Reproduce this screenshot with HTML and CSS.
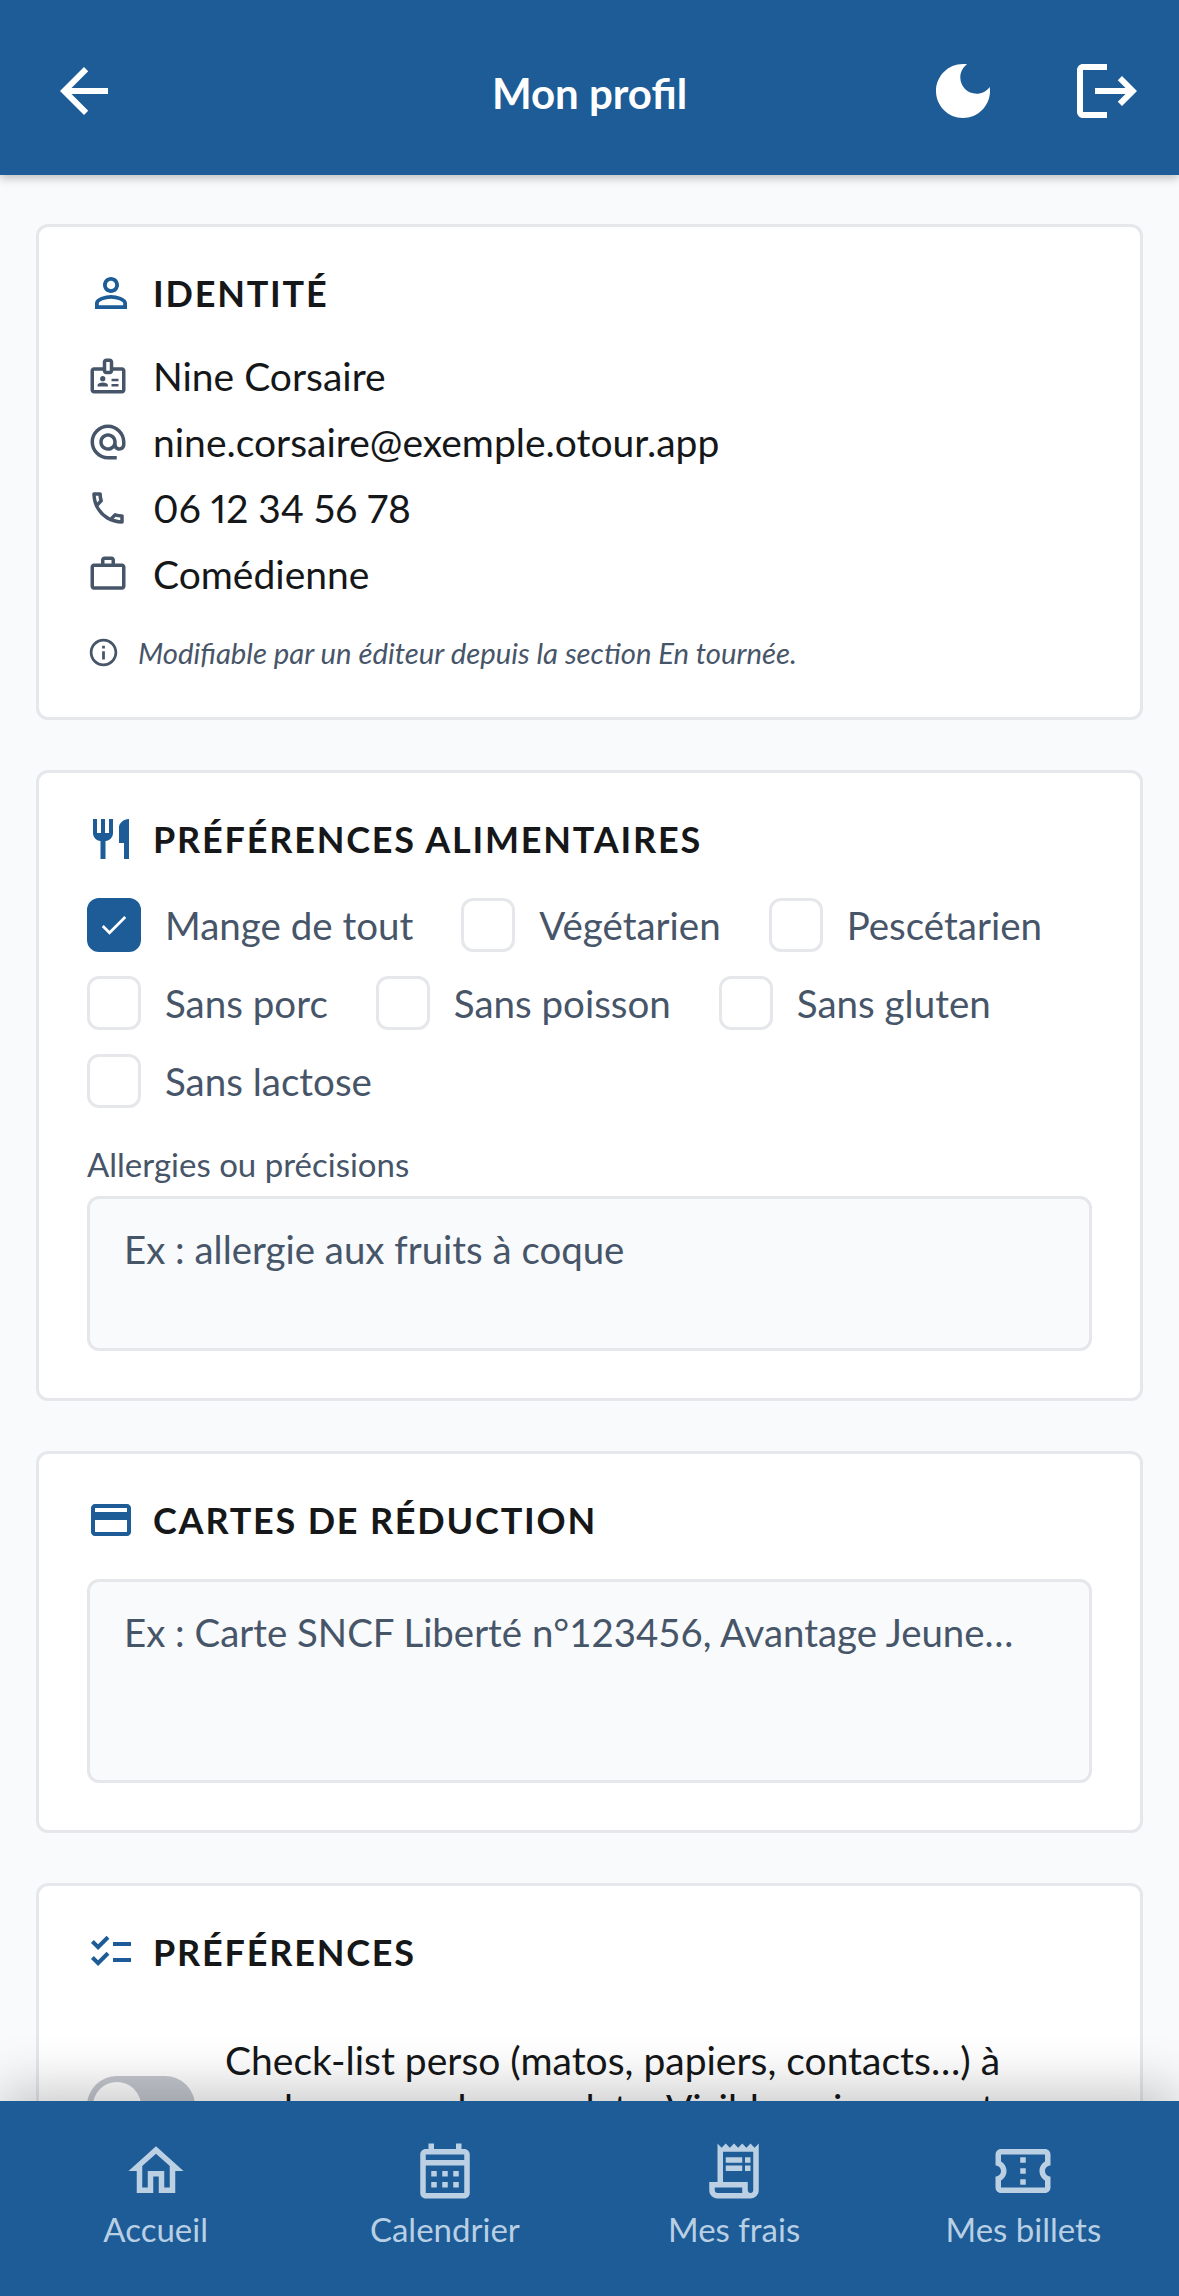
FILE: index.html
```html
<!DOCTYPE html>
<html lang="fr">
<head>
<meta charset="utf-8">
<title>Mon profil</title>
<link rel="stylesheet" href="styles.css">
</head>
<body>
<div class="app">
  <header class="topbar">
    <div class="topbar-left">
      <svg class="icon-72" viewBox="0 0 24 24"><path d="M20 11H7.83l5.59-5.59L12 4l-8 8 8 8 1.41-1.41L7.83 13H20v-2z"/></svg>
    </div>
    <h1 class="topbar-title">Mon profil</h1>
    <div class="topbar-right">
      <svg class="icon-72" viewBox="0 0 24 24"><path d="M12 3c-4.97 0-9 4.03-9 9s4.03 9 9 9 9-4.03 9-9c0-.46-.04-.92-.1-1.36-.98 1.37-2.58 2.26-4.4 2.26-2.98 0-5.4-2.42-5.4-5.4 0-1.81.89-3.42 2.26-4.4-.44-.06-.9-.1-1.36-.1z"/></svg>
      <svg class="icon-72" viewBox="0 0 24 24"><path d="M17 7l-1.41 1.41L18.17 11H8v2h10.17l-2.58 2.58L17 17l5-5zM4 5h8V3H4c-1.1 0-2 .9-2 2v14c0 1.1.9 2 2 2h8v-2H4V5z"/></svg>
    </div>
  </header>

  <main class="content">
    <section class="card card-identity">
      <div class="card-head">
        <svg class="icon-head" viewBox="0 0 24 24"><path d="M12 5.9c1.16 0 2.1.94 2.1 2.1s-.94 2.1-2.1 2.1S9.9 9.16 9.9 8s.94-2.1 2.1-2.1m0 9c2.97 0 6.1 1.46 6.1 2.1v1.1H5.9V17c0-.64 3.13-2.1 6.1-2.1M12 4C9.79 4 8 5.79 8 8s1.79 4 4 4 4-1.79 4-4-1.79-4-4-4zm0 9c-2.67 0-8 1.34-8 4v3h16v-3c0-2.66-5.33-4-8-4z"/></svg>
        <h2 class="card-title">IDENTITÉ</h2>
      </div>
      <ul class="info-list">
        <li class="info-row">
          <svg class="icon-row" viewBox="0 0 24 24"><path d="M20 7h-5V4c0-1.1-.9-2-2-2h-2c-1.1 0-2 .9-2 2v3H4c-1.1 0-2 .9-2 2v11c0 1.1.9 2 2 2h16c1.1 0 2-.9 2-2V9c0-1.1-.9-2-2-2zM11 4h2v5h-2V4zm9 16H4V9h5c0 1.1.9 2 2 2h2c1.1 0 2-.9 2-2h5v11zM18 13.5h-4V15h4zM18 16.5h-4V18h4zM11.08 16.18C10.44 15.9 9.74 15.75 9 15.75s-1.44.15-2.08.43C6.36 16.42 6 16.96 6 17.57V18h6v-.43c0-.61-.36-1.15-.92-1.39z"/><circle cx="9" cy="13.5" r="1.5"/></svg>
          <span>Nine Corsaire</span>
        </li>
        <li class="info-row">
          <svg class="icon-row" viewBox="0 0 24 24"><path d="M12 2C6.48 2 2 6.48 2 12s4.48 10 10 10h5v-2h-5c-4.34 0-8-3.66-8-8s3.66-8 8-8 8 3.66 8 8v1.43c0 .79-.71 1.57-1.5 1.57s-1.5-.78-1.5-1.57V12c0-2.76-2.24-5-5-5s-5 2.24-5 5 2.24 5 5 5c1.38 0 2.64-.56 3.54-1.47.65.89 1.77 1.47 2.96 1.47 1.97 0 3.5-1.6 3.5-3.57V12c0-5.52-4.48-10-10-10zm0 13c-1.66 0-3-1.34-3-3s1.34-3 3-3 3 1.34 3 3-1.34 3-3 3z"/></svg>
          <span>nine.corsaire@exemple.otour.app</span>
        </li>
        <li class="info-row">
          <svg class="icon-row" viewBox="0 0 24 24"><path d="M6.54 5c.06.89.21 1.76.45 2.59l-1.2 1.2c-.41-1.2-.67-2.47-.76-3.79h1.51m9.86 12.02c.85.24 1.72.39 2.6.45v1.49c-1.32-.09-2.59-.35-3.8-.75l1.2-1.19M7.5 3H4c-.55 0-1 .45-1 1 0 9.39 7.61 17 17 17 .55 0 1-.45 1-1v-3.49c0-.55-.45-1-1-1-1.24 0-2.45-.2-3.57-.57-.1-.04-.21-.05-.31-.05-.26 0-.51.1-.71.29l-2.2 2.2c-2.83-1.45-5.15-3.76-6.59-6.59l2.2-2.2c.28-.28.36-.67.25-1.02C8.7 6.45 8.5 5.25 8.5 4c0-.55-.45-1-1-1z"/></svg>
          <span class="digits">06 12 34 56 78</span>
        </li>
        <li class="info-row">
          <svg class="icon-row" viewBox="0 0 24 24"><path d="M14 6V4h-4v2h4zM4 8v11h16V8H4zm16-2c1.11 0 2 .89 2 2v11c0 1.11-.89 2-2 2H4c-1.11 0-2-.89-2-2l.01-11c0-1.11.88-2 1.99-2h4V4c0-1.11.89-2 2-2h4c1.11 0 2 .89 2 2v2h4z"/></svg>
          <span>Comédienne</span>
        </li>
      </ul>
      <p class="note">
        <svg class="icon-note" viewBox="0 0 24 24"><path d="M11 7h2v2h-2zm0 4h2v6h-2zm1-9C6.48 2 2 6.48 2 12s4.48 10 10 10 10-4.48 10-10S17.52 2 12 2zm0 18c-4.41 0-8-3.59-8-8s3.59-8 8-8 8 3.59 8 8-3.59 8-8 8z"/></svg>
        <em>Modifiable par un éditeur depuis la section En tournée.</em>
      </p>
    </section>

    <section class="card card-food">
      <div class="card-head">
        <svg class="icon-head" viewBox="0 0 24 24"><path d="M11 9H9V2H7v7H5V2H3v7c0 2.12 1.66 3.84 3.75 3.97V22h2.5v-9.03C11.34 12.84 13 11.12 13 9V2h-2v7zm5-3v8h2.5v8H21V2c-2.76 0-5 2.24-5 4z"/></svg>
        <h2 class="card-title">PRÉFÉRENCES ALIMENTAIRES</h2>
      </div>
      <div class="checks">
        <label class="check"><span class="box box-on"><svg viewBox="0 0 24 24"><path d="M4.5 12.7 9 17.2 19.5 6.7"/></svg></span>Mange de tout</label>
        <label class="check"><span class="box"></span>Végétarien</label>
        <label class="check"><span class="box"></span>Pescétarien</label>
        <label class="check"><span class="box"></span>Sans porc</label>
        <label class="check"><span class="box"></span>Sans poisson</label>
        <label class="check"><span class="box"></span>Sans gluten</label>
        <label class="check"><span class="box"></span>Sans lactose</label>
      </div>
      <div class="field-label">Allergies ou précisions</div>
      <div class="textarea textarea-short">Ex : allergie aux fruits à coque</div>
    </section>

    <section class="card card-cards">
      <div class="card-head">
        <svg class="icon-head" viewBox="0 0 24 24"><path d="M20 4H4c-1.11 0-1.99.89-1.99 2L2 18c0 1.11.89 2 2 2h16c1.11 0 2-.89 2-2V6c0-1.11-.89-2-2-2zm0 14H4v-6h16v6zm0-10H4V6h16v2z"/></svg>
        <h2 class="card-title">CARTES DE RÉDUCTION</h2>
      </div>
      <div class="textarea textarea-tall">Ex : Carte SNCF Liberté n°123456, Avantage Jeune…</div>
    </section>

    <section class="card card-prefs">
      <div class="card-head">
        <svg class="icon-head" viewBox="0 0 24 24"><path d="M22 7h-9v2h9V7zm0 8h-9v2h9v-2zM5.54 11 2 7.46l1.41-1.41 2.12 2.12 4.24-4.24 1.41 1.41L5.54 11zm0 8L2 15.46l1.41-1.41 2.12 2.12 4.24-4.24 1.41 1.41L5.54 19z"/></svg>
        <h2 class="card-title">PRÉFÉRENCES</h2>
      </div>
      <div class="toggle-row">
        <span class="toggle"><span class="knob"></span></span>
        <p class="toggle-text">Check-list perso (matos, papiers, contacts…) à cocher pour chaque date. Visible uniquement par vous.</p>
      </div>
    </section>
  </main>

  <nav class="tabbar">
    <div class="tab">
      <svg class="icon-tab" viewBox="0 0 24 24"><path d="M12 5.69l5 4.5V18h-2v-6H9v6H7v-7.81l5-4.5M12 3L2 12h3v8h6v-6h2v6h6v-8h3L12 3z"/></svg>
      <span>Accueil</span>
    </div>
    <div class="tab">
      <svg class="icon-tab" viewBox="0 0 24 24"><path d="M19 4h-1V2h-2v2H8V2H6v2H5c-1.1 0-2 .9-2 2v14c0 1.1.9 2 2 2h14c1.1 0 2-.9 2-2V6c0-1.1-.9-2-2-2zm0 16H5V10h14v10zm0-12H5V6h14v2zM9 14H7v-2h2v2zm4 0h-2v-2h2v2zm4 0h-2v-2h2v2zm-8 4H7v-2h2v2zm4 0h-2v-2h2v2zm4 0h-2v-2h2v2z"/></svg>
      <span>Calendrier</span>
    </div>
    <div class="tab">
      <svg class="icon-tab" viewBox="0 0 24 24"><path d="M19.5 3.5 18 2l-1.5 1.5L15 2l-1.5 1.5L12 2l-1.5 1.5L9 2 7.5 3.5 6 2v14H3v3c0 1.66 1.34 3 3 3h12c1.66 0 3-1.34 3-3V2l-1.5 1.5zM15 20H6c-.55 0-1-.45-1-1v-1h10v2zm4-1c0 .55-.45 1-1 1s-1-.45-1-1v-3H8V5h11v14z"/><path d="M9 7h6v2H9zM16 7h2v2h-2zM9 10h6v2H9zM16 10h2v2h-2z"/></svg>
      <span>Mes frais</span>
    </div>
    <div class="tab">
      <svg class="icon-tab" viewBox="0 0 24 24"><path d="M22 10V6c0-1.11-.9-2-2-2H4c-1.1 0-1.99.89-1.99 2v4c1.1 0 1.99.9 1.99 2s-.89 2-2 2v4c0 1.1.9 2 2 2h16c1.1 0 2-.9 2-2v-4c-1.1 0-2-.9-2-2s.9-2 2-2zm-2-1.46c-1.19.69-2 1.99-2 3.46s.81 2.77 2 3.46V18H4v-2.54c1.19-.69 2-1.99 2-3.46 0-1.48-.8-2.77-1.99-3.46L4 6h16v2.54zM11 15h2v2h-2zm0-4h2v2h-2zm0-4h2v2h-2z"/></svg>
      <span>Mes billets</span>
    </div>
  </nav>
</div>
</body>
</html>
```
FILE: styles.css
```css
* { box-sizing: border-box; }
html, body { margin: 0; padding: 0; }
body { font-family: "Lato", sans-serif; background: #f8fafc; color: #151719; }
.app { width: 1179px; height: 2296px; display: flex; flex-direction: column; overflow: hidden; position: relative; }

.topbar {
  flex: 0 0 175px; display: grid; grid-template-columns: 1fr auto 1fr; align-items: center;
  padding: 7px 36px 0; background: #1d5c96; color: #fff;
  box-shadow: 0 3px 9px rgba(0,0,0,.25); position: relative; z-index: 2;
}
.topbar-right { display: flex; justify-content: flex-end; gap: 72px; }
.topbar-left { display: flex; padding-left: 12px; }
.topbar-title { margin: 0; padding-top: 3px; font-size: 42px; font-weight: 700; line-height: 54px; }
.icon-72 { width: 72px; height: 72px; fill: #fff; display: block; }

.content { flex: 1; min-height: 0; overflow: hidden; padding: 49px 36px 0; display: flex; flex-direction: column; gap: 50px; }
.card { flex: none; background: #fff; border: 3px solid #e5e7eb; border-radius: 12px; padding: 24px 48px 48px; }
.card-identity { height: 496px; }
.card-food { height: 631px; }
.card-cards { height: 382px; }
.card-prefs { height: 420px; }

.card-head { display: flex; align-items: center; gap: 18px; height: 48px; margin-top: 18px; }
.icon-head { width: 48px; height: 48px; fill: #1d5c96; flex: none; }
.card-title { margin: 0; font-size: 36px; font-weight: 700; letter-spacing: 1.8px; color: #151719; line-height: 48px; }

.info-list { list-style: none; margin: 26px 0 0; padding: 0; display: flex; flex-direction: column; }
.info-row { display: flex; align-items: center; gap: 24px; height: 66px; font-size: 39px; color: #151719; }
.digits { font-variant-numeric: proportional-nums; }
.icon-row { width: 42px; height: 42px; fill: #475569; flex: none; }

.note { margin: 23px 0 0; display: flex; align-items: center; gap: 18px; font-size: 29.3px; color: #475569; height: 44px; }
.icon-note { width: 33px; height: 33px; fill: #475569; flex: none; }

.checks { display: flex; flex-wrap: wrap; column-gap: 48px; row-gap: 24px; margin-top: 35px; }
.check { display: flex; align-items: center; gap: 24px; height: 54px; font-size: 38.5px; color: #475569; }
.box { width: 54px; height: 54px; border: 3px solid #e5e7eb; border-radius: 12px; background: #fff; display: flex; align-items: center; justify-content: center; flex: none; }
.box-on { background: #1d5c96; border-color: #1d5c96; }
.box-on svg { width: 36px; height: 36px; fill: none; stroke: #fff; stroke-width: 1.8; }

.field-label { margin-top: 34px; font-size: 33px; line-height: 44px; color: #475569; }
.textarea { background: #f8fafc; border: 3px solid #e5e7eb; border-radius: 12px; padding: 25px 34px; font-size: 38.4px; line-height: 50px; color: #475569; }
.textarea-short { height: 155px; margin-top: 10px; }
.textarea-tall { height: 204px; margin-top: 35px; }

.toggle-row { display: flex; align-items: flex-start; gap: 30px; margin-top: 60px; }
.toggle { width: 108px; height: 60px; flex: none; margin-top: 40px; border-radius: 30px; background: #c4c8cf; padding: 6px; display: flex; }
.knob { width: 48px; height: 48px; border-radius: 50%; background: #fff; }
.toggle-text { margin: 0; font-size: 39px; line-height: 48px; color: #151719; }

.tabbar {
  flex: 0 0 195px; display: flex; padding: 37px 11px 0; background: #1d5c96; color: #b9cfe4;
  box-shadow: 0 -12px 50px rgba(0,0,0,.22); position: relative; z-index: 2;
}
.tab { flex: 1; display: flex; flex-direction: column; align-items: center; font-size: 33px; line-height: 44px; }
.icon-tab { width: 66px; height: 66px; fill: #bcd0e4; margin-bottom: 3px; }
```
